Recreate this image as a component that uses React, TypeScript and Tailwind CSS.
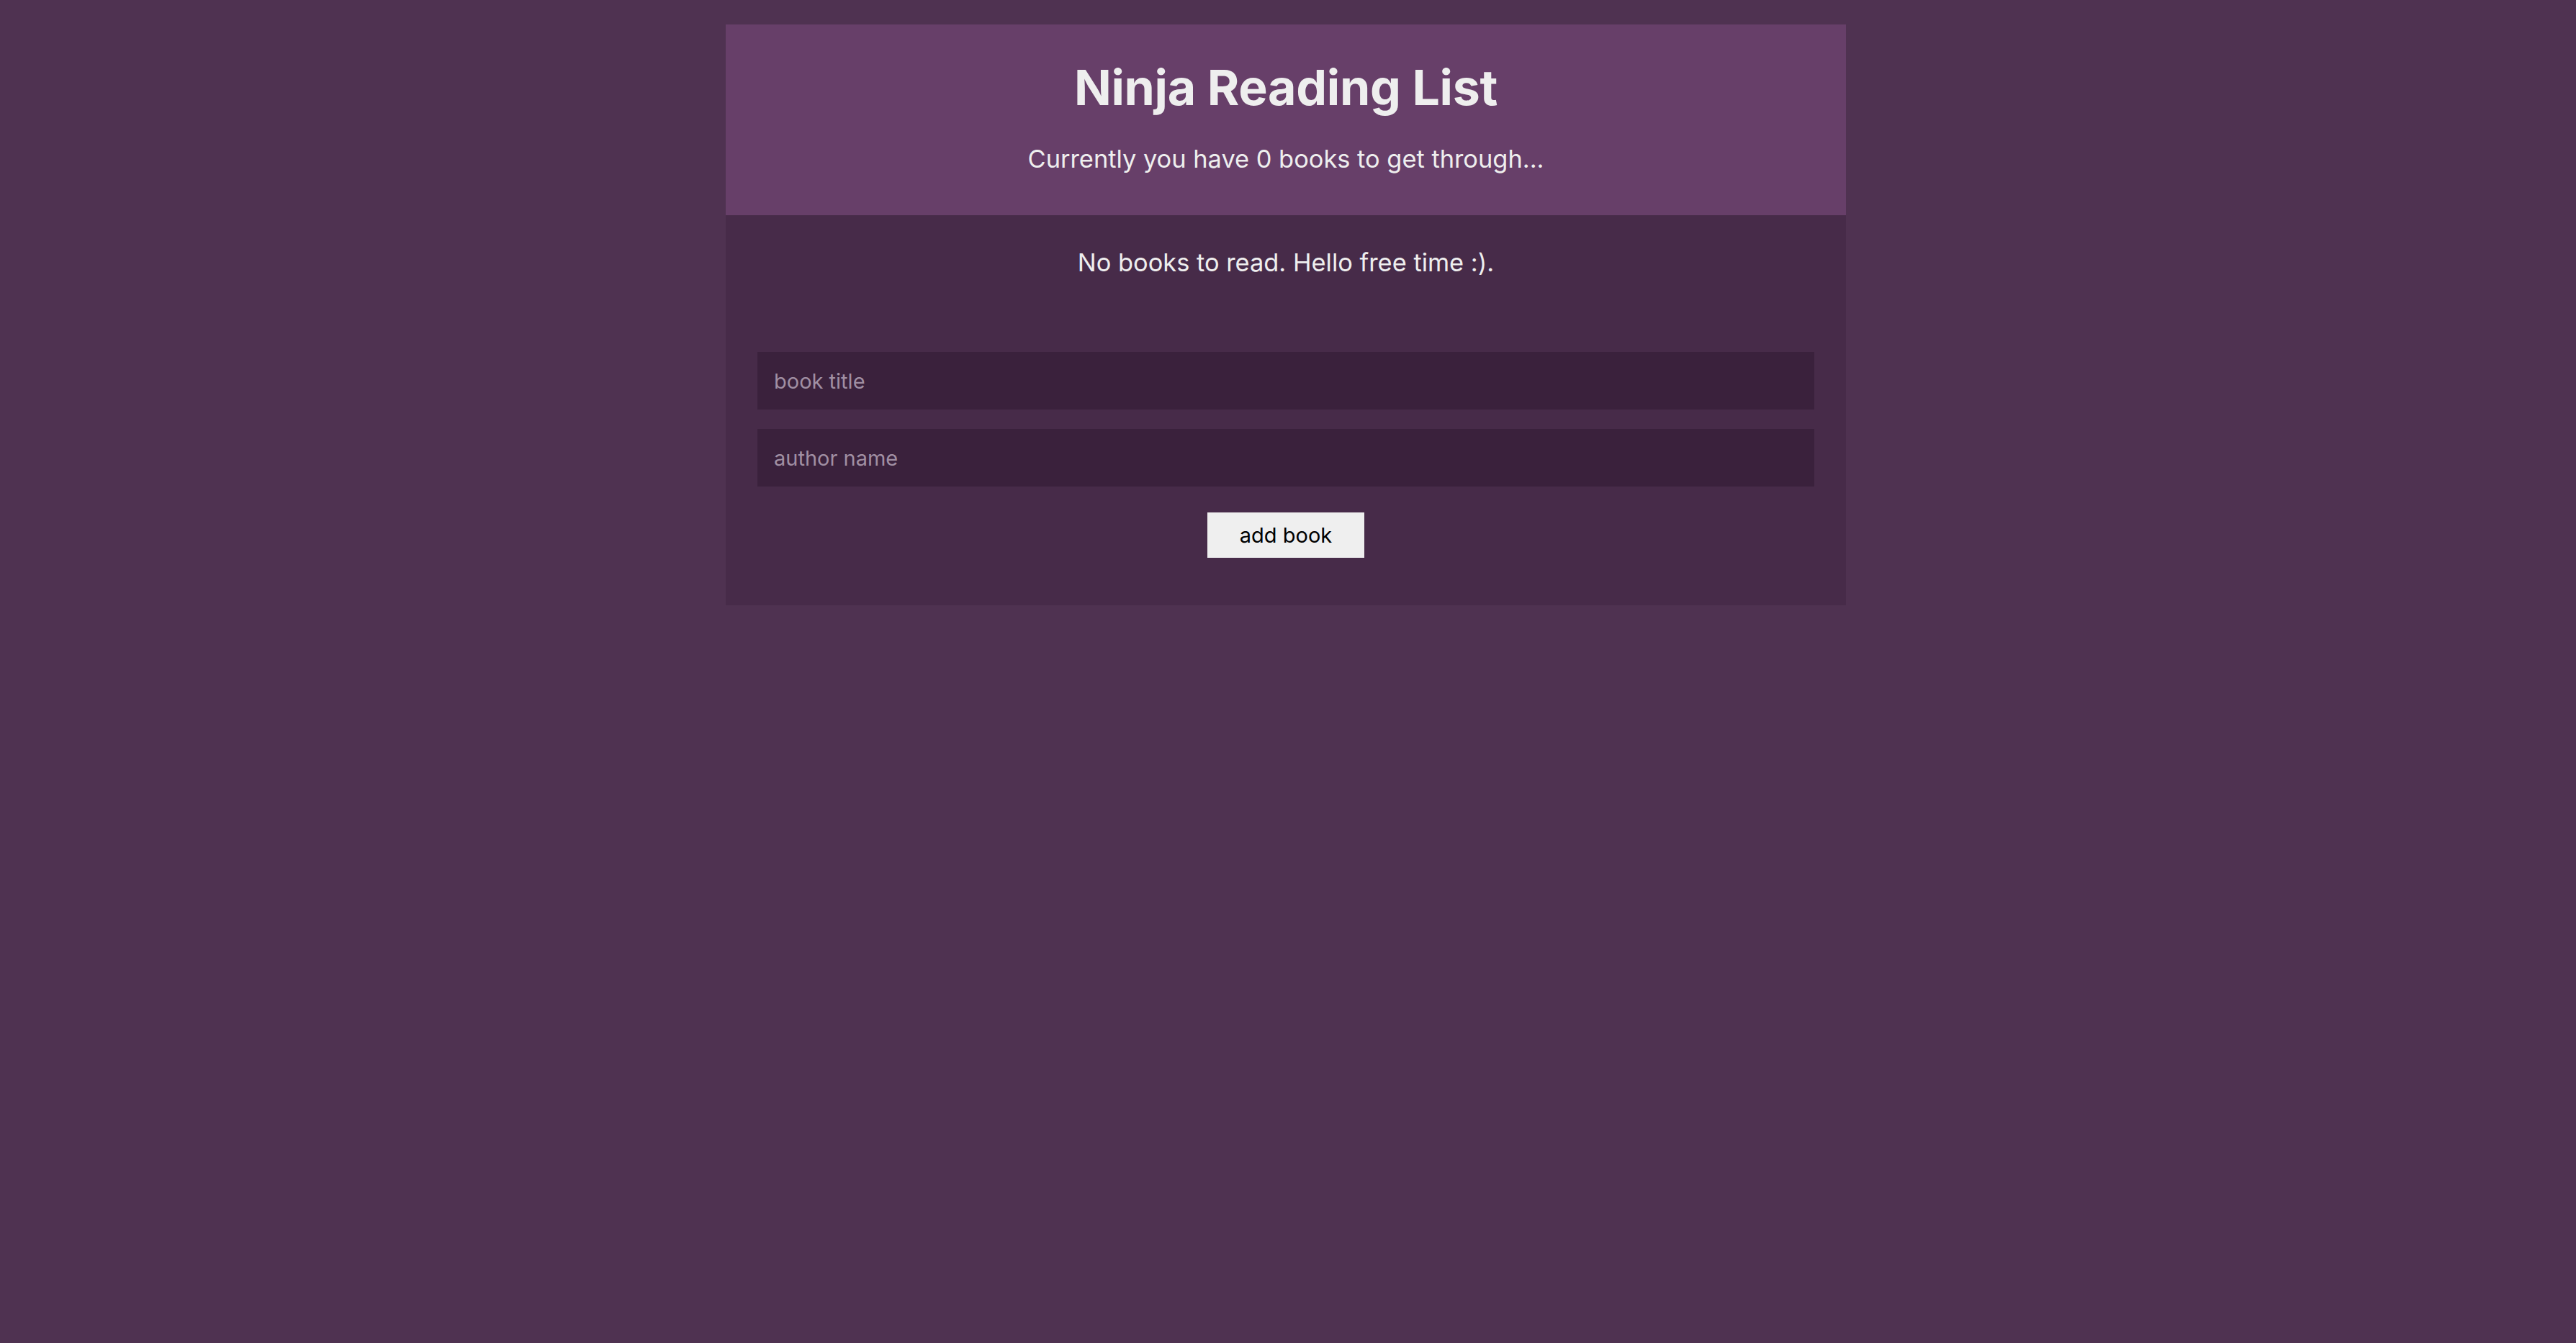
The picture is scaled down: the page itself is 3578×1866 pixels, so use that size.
const Navbar: React.FC = () => {
  return (
    <div className="bg-[#673f69] px-[44px] py-[22px] text-center">
      <h1 className="mt-[22px] text-[68px] leading-[86px] font-bold tracking-[-0.3px]">Ninja Reading List</h1>
      <p className="my-[35px] text-[34.4px] leading-[43px]">
        Currently you have 0 books to get through...
      </p>
    </div>
  );
};

const BookForm: React.FC = () => {
  return (
    <form className="flex flex-col p-[44px]" onSubmit={(e) => e.preventDefault()}>
      <input
        type="text"
        placeholder="book title"
        className="block w-full mt-[13px] mb-[14px] h-[80px] px-[23px] bg-[#3a213c] text-white text-[29px] placeholder:text-[#a08fa3] border-0 outline-none"
      />
      <input
        type="text"
        placeholder="author name"
        className="block w-full mt-[13px] mb-[14px] h-[80px] px-[23px] bg-[#3a213c] text-white text-[29px] placeholder:text-[#a08fa3] border-0 outline-none"
      />
      <button
        type="submit"
        className="block mx-auto mt-[22px] mb-[22px] h-[63px] w-[218px] bg-[#efefef] text-black text-[29px]"
      >
        add book
      </button>
    </form>
  );
};

export default function App() {
  return (
    <div
      className="min-h-screen bg-[#4f3251] pt-[34px] pr-[6px] text-[#eee]"
      style={{ fontFamily: "Inter, 'Noto Sans', sans-serif" }}
    >
      <div className="mx-auto w-[1556px] bg-[#472b49]">
        <Navbar />
        <div className="m-[44px] mb-[0px] text-center text-[34.4px] leading-[43px]">
          No books to read. Hello free time :).
        </div>
        <div className="h-[46px]" />
        <BookForm />
      </div>
    </div>
  );
}
